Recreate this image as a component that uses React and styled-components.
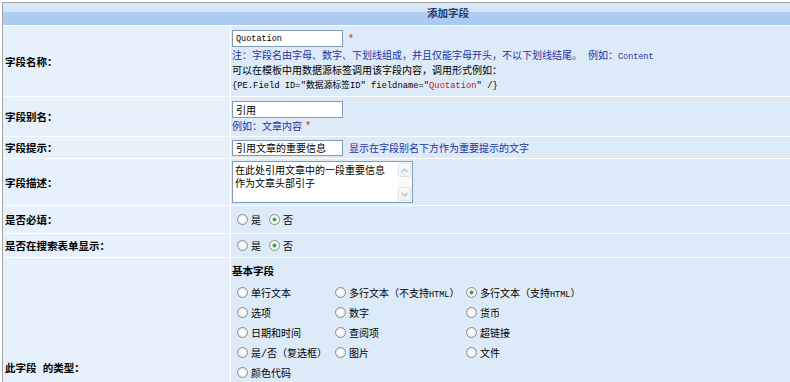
import React from 'react';
import styled, { createGlobalStyle } from 'styled-components';

const Global = createGlobalStyle`
  html, body { margin: 0; padding: 0; overflow: hidden; background: #fff; }
  body {
    font-family: "Liberation Mono", "Noto Sans CJK SC", monospace;
    font-size: 10px;
    color: #000;
  }
`;

const Page = styled.div`
  padding: 2px 0 0 2px;
`;

const Table = styled.div`
  width: 890px;
  display: grid;
  grid-template-columns: 227px 1fr;
  gap: 1px;
  background: #fff;
  border-left: 1px solid #a4a4a4;
  border-top: 1px solid #a4a4a4;
`;

const Header = styled.div`
  grid-column: 1 / -1;
  height: 22px;
  line-height: 22px;
  text-align: center;
  font-weight: bold;
  font-size: 10.5px;
  color: #1d3a6b;
  background: linear-gradient(#d9e8f9 0, #d3e4f8 9px, #afccf2 9px, #aac9f1 100%);
`;

const Label = styled.div`
  background: #e6f1fb;
  display: flex;
  align-items: center;
  padding-left: 2px;
  font-weight: bold;
  font-size: 10.5px;
  white-space: pre;
`;

const Value = styled.div`
  background: #ddeaf7;
  min-height: ${p => p.$h}px;
  box-sizing: border-box;
  display: flex;
  flex-direction: column;
  justify-content: ${p => (p.$top ? 'flex-start' : 'center')};
  padding: ${p => p.$pt || 0}px 0 0 1px;
`;

const Line = styled.div`
  display: flex;
  align-items: center;
  height: 15px;
  white-space: pre;
  color: ${p => p.$color || '#000'};
`;

const TextInput = styled.input`
  width: 111px;
  height: ${p => p.$h || 17}px;
  box-sizing: border-box;
  border: 1px solid #7f9db9;
  background: #fff;
  padding: 0 3px;
  margin: 0;
  font-family: "Liberation Mono", "Noto Sans CJK SC", monospace;
  font-size: ${p => (p.$latin ? 8.5 : 10)}px;
  color: #000;
  outline: none;
`;

const Required = styled.span`
  color: #e02222;
  margin-left: ${p => p.$ml ?? 6}px;
  font-family: "Liberation Sans", sans-serif;
`;

const Blue = styled.span`
  color: #2233aa;
`;

const Latin = styled.span`
  font-family: "Liberation Mono", monospace;
  font-size: 8.5px;
`;

const Hint = styled.span`
  color: #2233aa;
  margin-left: 6px;
`;

const Code = styled.span`
  font-family: "Liberation Mono", "Noto Sans CJK SC", monospace;
  font-size: 8.8px;
`;

const Red = styled.span`
  color: #cc1111;
`;

const AreaBox = styled.div`
  width: 181px;
  height: 42px;
  box-sizing: border-box;
  border: 1px solid #7f9db9;
  background: #fff;
  display: flex;
`;

const TextArea = styled.textarea`
  flex: 1;
  min-width: 0;
  border: none;
  background: transparent;
  padding: 1px 2px;
  margin: 0;
  resize: none;
  overflow: hidden;
  font-family: "Noto Sans CJK SC", sans-serif;
  font-size: 10px;
  line-height: 13px;
  color: #000;
  outline: none;
`;

const ScrollBar = styled.div`
  width: 14px;
  background: #fafafa;
  display: flex;
  flex-direction: column;
  justify-content: space-between;
  padding: 1px 0;
`;

const ScrollBtn = styled.div`
  width: 13px;
  height: 14px;
  box-sizing: border-box;
  border: 1px solid #e2e4e6;
  border-radius: 2px;
  background: linear-gradient(#fbfbfb, #eef0f2);
  display: flex;
  align-items: center;
  justify-content: center;
`;

const RadioRow = styled.div`
  display: flex;
  align-items: center;
`;

const RadioItem = styled.label`
  display: inline-flex;
  align-items: center;
  margin-right: 3px;
  white-space: pre;
`;

const RadioText = styled.span`
  white-space: pre;
`;

const Radio = styled.input.attrs({ type: 'radio' })`
  appearance: none;
  -webkit-appearance: none;
  flex-shrink: 0;
  width: 11px;
  height: 11px;
  box-sizing: border-box;
  border: 1px solid #8a8f96;
  border-radius: 50%;
  margin: 0 3px 0 5px;
  background: radial-gradient(circle at 50% 50%, #ffffff 0, #f4f4f4 50%, #dcdcdc 100%);
  &:checked {
    background: radial-gradient(circle at 50% 50%, #2fae3e 0, #2fae3e 1.6px, #ffffff 2.4px, #f0f0f0 70%, #dcdcdc 100%);
  }
`;

const GroupTitle = styled.div`
  height: 20px;
  line-height: 20px;
  font-weight: bold;
  font-size: 10.5px;
`;

const TypeGrid = styled.div`
  display: grid;
  grid-template-columns: 98px 131px auto;
  grid-auto-rows: 20px;
  align-items: center;
`;

const types = [
  { label: '单行文本' },
  { label: '多行文本（不支持', latin: 'HTML', tail: '）' },
  { label: '多行文本（支持', latin: 'HTML', tail: '）', checked: true },
  { label: '选项' },
  { label: '数字' },
  { label: '货币' },
  { label: '日期和时间' },
  { label: '查阅项' },
  { label: '超链接' },
  { label: '是/否（复选框）' },
  { label: '图片' },
  { label: '文件' },
  { label: '颜色代码' },
];

function Chevron({ up }) {
  return (
    <svg width="7" height="5" viewBox="0 0 7 5">
      <path
        d={up ? 'M0.5 4 L3.5 1 L6.5 4' : 'M0.5 1 L3.5 4 L6.5 1'}
        fill="none"
        stroke="#b9bcc0"
        strokeWidth="1.2"
      />
    </svg>
  );
}

function YesNo({ name }) {
  return (
    <RadioRow>
      <RadioItem>
        <Radio name={name} />
        <RadioText>是</RadioText>
      </RadioItem>
      <RadioItem>
        <Radio name={name} defaultChecked />
        <RadioText>否</RadioText>
      </RadioItem>
    </RadioRow>
  );
}

export default function App() {
  return (
    <Page>
      <Global />
      <Table>
        <Header>添加字段</Header>

        <Label>字段名称：</Label>
        <Value $h={70}>
          <RadioRow>
            <TextInput $latin defaultValue="Quotation" />
            <Required>*</Required>
          </RadioRow>
          <Line>
            <Blue>
              注：字段名由字母、数字、下划线组成，并且仅能字母开头，不以下划线结尾。 例如：<Latin>Content</Latin>
            </Blue>
          </Line>
          <Line>可以在模板中用数据源标签调用该字段内容，调用形式例如：</Line>
          <Line>
            <Code>
              {'{PE.Field ID="数据源标签ID" fieldname="'}
              <Red>Quotation</Red>
              {'" /}'}
            </Code>
          </Line>
        </Value>

        <Label>字段别名：</Label>
        <Value $h={39}>
          <RadioRow>
            <TextInput defaultValue="引用" />
          </RadioRow>
          <Line>
            <Blue>例如：文章内容</Blue>
            <Required $ml={4}>*</Required>
          </Line>
        </Value>

        <Label>字段提示：</Label>
        <Value $h={21}>
          <RadioRow>
            <TextInput $h={16} defaultValue="引用文章的重要信息" />
            <Hint>显示在字段别名下方作为重要提示的文字</Hint>
          </RadioRow>
        </Value>

        <Label>字段描述：</Label>
        <Value $h={46}>
          <RadioRow>
            <AreaBox>
              <TextArea defaultValue={'在此处引用文章中的一段重要信息\n作为文章头部引子'} />
              <ScrollBar>
                <ScrollBtn>
                  <Chevron up />
                </ScrollBtn>
                <ScrollBtn>
                  <Chevron />
                </ScrollBtn>
              </ScrollBar>
            </AreaBox>
          </RadioRow>
        </Value>

        <Label>是否必填：</Label>
        <Value $h={27}>
          <YesNo name="required" />
        </Value>

        <Label>是否在搜索表单显示：</Label>
        <Value $h={23}>
          <YesNo name="search" />
        </Value>

        <Label>此字段 的类型：</Label>
        <Value $h={218} $top $pt={4}>
          <GroupTitle>基本字段</GroupTitle>
          <TypeGrid>
            {types.map(t => (
              <RadioItem key={t.label}>
                <Radio name="type" defaultChecked={!!t.checked} />
                <RadioText>
                  {t.label}
                  {t.latin && <Latin>{t.latin}</Latin>}
                  {t.tail}
                </RadioText>
              </RadioItem>
            ))}
          </TypeGrid>
        </Value>
      </Table>
    </Page>
  );
}
